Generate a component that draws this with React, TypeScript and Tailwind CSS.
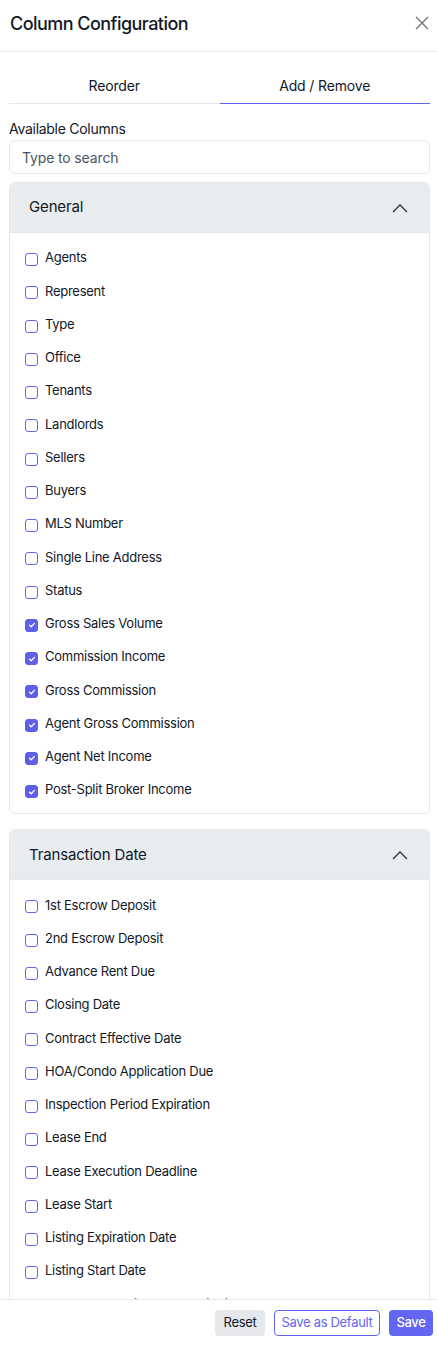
import React, { useState } from 'react';

const generalColumns = [
  { name: 'Agents', checked: false },
  { name: 'Represent', checked: false },
  { name: 'Type', checked: false },
  { name: 'Office', checked: false },
  { name: 'Tenants', checked: false },
  { name: 'Landlords', checked: false },
  { name: 'Sellers', checked: false },
  { name: 'Buyers', checked: false },
  { name: 'MLS Number', checked: false },
  { name: 'Single Line Address', checked: false },
  { name: 'Status', checked: false },
  { name: 'Gross Sales Volume', checked: true },
  { name: 'Commission Income', checked: true },
  { name: 'Gross Commission', checked: true },
  { name: 'Agent Gross Commission', checked: true },
  { name: 'Agent Net Income', checked: true },
  { name: 'Post-Split Broker Income', checked: true },
];

const dateColumns = [
  '1st Escrow Deposit',
  '2nd Escrow Deposit',
  'Advance Rent Due',
  'Closing Date',
  'Contract Effective Date',
  'HOA/Condo Application Due',
  'Inspection Period Expiration',
  'Lease End',
  'Lease Execution Deadline',
  'Lease Start',
  'Listing Expiration Date',
  'Listing Start Date',
  'Mortgage Contingency Expiration',
  'Title Commitment Due',
].map((name) => ({ name, checked: false }));

function Checkbox({ checked }: { checked: boolean }) {
  return (
    <span
      className={`flex h-[13px] w-[13px] shrink-0 items-center justify-center rounded-[3px] border ${
        checked ? 'border-[#5f5fe8] bg-[#5f5fe8]' : 'border-[#6366f1] bg-white'
      }`}
    >
      {checked && (
        <svg width="8" height="8" viewBox="0 0 8 8" fill="none">
          <path d="M1.6 4.2 3.2 5.7 6.4 2.4" stroke="white" strokeWidth="1.3" strokeLinecap="round" strokeLinejoin="round" />
        </svg>
      )}
    </span>
  );
}

function Section({ title, items }: { title: string; items: { name: string; checked: boolean }[] }) {
  const [open, setOpen] = useState(true);
  return (
    <div className="overflow-hidden rounded-md border border-[#e5e7eb] bg-white">
      <button
        onClick={() => setOpen(!open)}
        className="flex h-[50px] w-full items-center justify-between border-b border-[#e5e7eb] bg-[#e9ecef] pl-[19px] pr-[20px] text-left text-[15px] tracking-[-0.01em] text-[#111827]"
      >
        <span>{title}</span>
        <svg width="18" height="18" viewBox="0 0 18 18" fill="none">
          <path d="M2 13 9 6l7 7" stroke="#333" strokeWidth="1.3" />
        </svg>
      </button>
      {open && (
        <div className="pb-[5px] pt-[10px]">
          {items.map((item) => (
            <label key={item.name} className="flex h-[33.25px] items-center gap-[7px] px-[15px] text-[13px] tracking-[-0.02em] text-[#111827]">
              <Checkbox checked={item.checked} />
              <span className="-mt-[3px]">{item.name}</span>
            </label>
          ))}
        </div>
      )}
    </div>
  );
}

export default function App() {
  const [tab, setTab] = useState('add');

  return (
    <div className="flex h-[1346px] flex-col overflow-hidden bg-white font-['Inter',sans-serif] text-[#111827]">
      <div className="flex h-[52px] shrink-0 items-center justify-between border-b border-[#e5e7eb] px-[10px]">
        <h1 className="-mt-[4px] text-[18px] font-medium tracking-[-0.03em]">Column Configuration</h1>
        <svg width="16" height="16" viewBox="0 0 16 16" fill="none" className="-mt-[6px] mr-[-3px]">
          <path d="M2 2l12 12M14 2 2 14" stroke="#777" strokeWidth="1.4" />
        </svg>
      </div>

      <div className="flex-1 overflow-hidden pl-[9px] pr-[7px]">
        <div className="mt-[15px] flex">
          <button
            onClick={() => setTab('reorder')}
            className={`h-[37px] flex-1 border-b text-[14px] tracking-[-0.01em] ${tab === 'reorder' ? 'border-[#6366f1]' : 'border-[#e5e7eb]'}`}
          >
            Reorder
          </button>
          <button
            onClick={() => setTab('add')}
            className={`h-[37px] flex-1 border-b text-[14px] tracking-[-0.01em] ${tab === 'add' ? 'border-[#6366f1]' : 'border-[#e5e7eb]'}`}
          >
            Add / Remove
          </button>
        </div>

        <div className="mt-[15px] text-[14px] leading-[20px] tracking-[-0.02em]">Available Columns</div>
        <input
          placeholder="Type to search"
          className="mt-[1px] h-[34px] w-full rounded-md border border-[#e5e7eb] px-[12px] text-[14px] tracking-[-0.01em] outline-none placeholder:text-[#4b5563]"
        />

        <div className="mt-[8px] space-y-[15px]">
          <Section title="General" items={generalColumns} />
          <Section title="Transaction Date" items={dateColumns} />
        </div>
      </div>

      <div className="flex h-[47px] shrink-0 items-center justify-end gap-[9px] border-t border-[#e5e7eb] px-[4px] tracking-[-0.02em]">
        <button className="h-[26px] w-[50px] rounded-[4px] bg-[#e5e7eb] text-[13px] text-[#111827]">Reset</button>
        <button className="h-[26px] w-[106px] rounded-[4px] border border-[#6366f1] bg-white text-[13px] text-[#6366f1]">Save as Default</button>
        <button className="h-[26px] w-[44px] rounded-[4px] bg-[#6366f1] text-[13px] font-medium text-white">Save</button>
      </div>
    </div>
  );
}
